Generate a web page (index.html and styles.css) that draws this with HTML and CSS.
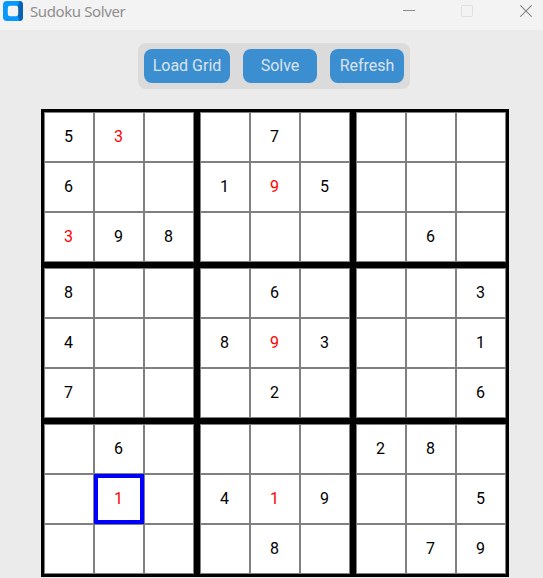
FILE: index.html
```
<!DOCTYPE html>
<html lang="en">
<head>
<meta charset="utf-8">
<title>Sudoku Solver</title>
<link rel="stylesheet" href="styles.css">
</head>
<body>
<header class="titlebar">
  <svg class="logo" width="20" height="20" viewBox="0 0 20 20"><rect width="20" height="20" rx="4" fill="#0698fb"/><path d="M15 5L16.5 0Q20 .3 20 4V16Q20 19.7 16.5 20L15 15Z" fill="#0562b5"/><rect x="4.8" y="4.8" width="10.4" height="10.4" rx="2.3" fill="#f3f3f3"/></svg>
  <h1 class="title">Sudoku Solver</h1>
  <div class="controls">
    <svg width="12" height="12" viewBox="0 0 12 12"><path d="M0 5.5H12" stroke="#8f8f8f"/></svg>
    <svg width="12" height="12" viewBox="0 0 12 12"><rect x=".5" y=".5" width="11" height="11" rx="1" fill="none" stroke="#dedede"/></svg>
    <svg width="12" height="12" viewBox="0 0 12 12"><path d="M.3.3L11.7 11.7M11.7.3L.3 11.7" stroke="#858585" stroke-width="1.1"/></svg>
  </div>
</header>
<main class="app">
  <div class="toolbar">
    <button class="btn load">Load Grid</button>
    <button class="btn solve">Solve</button>
    <button class="btn refresh">Refresh</button>
  </div>
  <div class="board">
    <div class="block"><span>5</span><span class="red">3</span><span></span><span>6</span><span></span><span></span><span class="red">3</span><span>9</span><span>8</span></div>
    <div class="block"><span></span><span>7</span><span></span><span>1</span><span class="red">9</span><span>5</span><span></span><span></span><span></span></div>
    <div class="block"><span></span><span></span><span></span><span></span><span></span><span></span><span></span><span>6</span><span></span></div>
    <div class="block"><span>8</span><span></span><span></span><span>4</span><span></span><span></span><span>7</span><span></span><span></span></div>
    <div class="block"><span></span><span>6</span><span></span><span>8</span><span class="red">9</span><span>3</span><span></span><span>2</span><span></span></div>
    <div class="block"><span></span><span></span><span>3</span><span></span><span></span><span>1</span><span></span><span></span><span>6</span></div>
    <div class="block"><span></span><span>6</span><span></span><span></span><span class="red selected">1</span><span></span><span></span><span></span><span></span></div>
    <div class="block"><span></span><span></span><span></span><span>4</span><span class="red">1</span><span>9</span><span></span><span>8</span><span></span></div>
    <div class="block"><span>2</span><span>8</span><span></span><span></span><span></span><span>5</span><span></span><span>7</span><span>9</span></div>
  </div>
</main>
</body>
</html>
```
FILE: styles.css
```
* { box-sizing: border-box; }
body {
  margin: 0;
  height: 578px;
  overflow: hidden;
  background: #ebebeb;
  font-family: Roboto, sans-serif;
}
.titlebar {
  display: flex;
  align-items: flex-start;
  height: 30px;
  padding: 1px 11px 0 3px;
  background: #f3f3f3;
}
.title {
  margin: 0 0 0 7px;
  font: 400 15px/20px "Noto Sans", sans-serif;
  letter-spacing: -0.4px;
  color: #8e8e8e;
}
.controls {
  display: flex;
  gap: 46px;
  margin: 4px 0 0 auto;
}
.controls svg:last-child { margin-left: 1px; }
.app { padding: 13px 0 0 41px; }
.toolbar {
  display: flex;
  gap: 13px;
  width: 272px;
  height: 46px;
  margin-left: 97px;
  padding: 6px;
  border-radius: 8px;
  background: #dbdbdb;
}
.btn {
  height: 34px;
  padding: 0;
  border: 0;
  border-radius: 8px;
  background: #3b8ed0;
  color: #dce4ee;
  font: 16px/34px Roboto, sans-serif;
}
.load { width: 86px; }
.solve { width: 74px; }
.refresh { width: 74px; }
.board {
  display: grid;
  grid-template-columns: repeat(3, 150px);
  gap: 6px;
  width: 468px;
  height: 468px;
  margin-top: 20px;
  padding: 3px;
  background: #000;
}
.block {
  display: grid;
  grid-template-columns: repeat(3, 50px);
  grid-auto-rows: 50px;
}
.block span {
  padding-right: 1px;
  border: 1px solid #808080;
  background: #fff;
  color: #000;
  font-size: 16px;
  line-height: 48px;
  text-align: center;
}
.block .red { color: #f00; }
.block .selected {
  border: 4px solid #00f;
  line-height: 42px;
}
```
